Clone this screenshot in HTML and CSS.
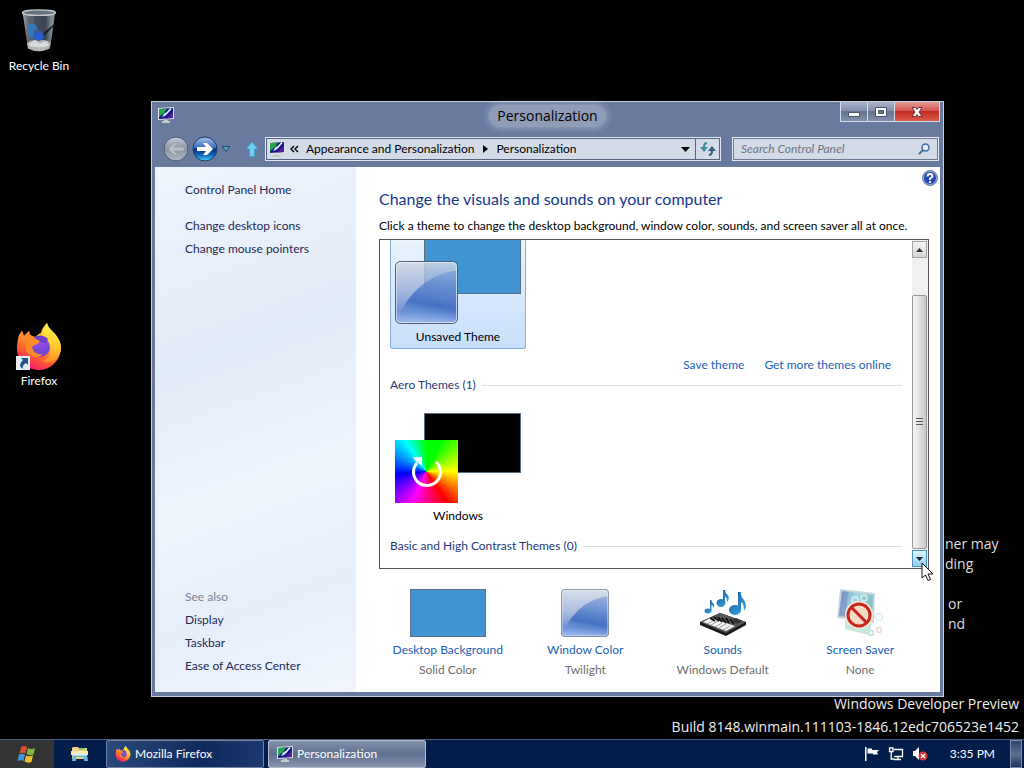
FILE: index.html
```html
<!DOCTYPE html>
<html lang="en">
<head>
  <meta charset="UTF-8">
  <meta name="viewport" content="width=device-width, initial-scale=1.0">
  <title>Personalization</title>
  <link rel="stylesheet" href="styles.css">
</head>
<body>
  <!-- shared icons -->
  <svg class="defs" aria-hidden="true">
    <defs>
      <linearGradient id="ffOuter" x1="0.8" y1="0" x2="0.3" y2="1">
        <stop offset="0" stop-color="#fff44f"/>
        <stop offset="0.35" stop-color="#ffb82e"/>
        <stop offset="0.65" stop-color="#ff6a2b"/>
        <stop offset="1" stop-color="#f5156c"/>
      </linearGradient>
      <linearGradient id="ffTail" x1="0.5" y1="0" x2="0.5" y2="1">
        <stop offset="0" stop-color="#fff04a"/>
        <stop offset="0.6" stop-color="#ffc92e"/>
        <stop offset="1" stop-color="#ff8a25"/>
      </linearGradient>
      <radialGradient id="ffGlobe" cx="0.6" cy="0.2" r="0.9">
        <stop offset="0" stop-color="#a44bea"/>
        <stop offset="1" stop-color="#5a45c8"/>
      </radialGradient>
      <linearGradient id="glass" x1="0" y1="0" x2="0" y2="1">
        <stop offset="0" stop-color="#d3dbe8" stop-opacity="0.85"/>
        <stop offset="0.45" stop-color="#93aad4" stop-opacity="0.75"/>
        <stop offset="0.8" stop-color="#6f93d6"/>
        <stop offset="1" stop-color="#9fbcf0"/>
      </linearGradient>
      <linearGradient id="glassDark" x1="0.6" y1="0" x2="0.4" y2="1">
        <stop offset="0" stop-color="#6f94d6" stop-opacity="0.6"/>
        <stop offset="0.65" stop-color="#4471c2"/>
        <stop offset="1" stop-color="#7ba0e0" stop-opacity="0"/>
      </linearGradient>
      <linearGradient id="bin" x1="0" y1="0" x2="1" y2="0">
        <stop offset="0" stop-color="#a7adb3"/>
        <stop offset="0.2" stop-color="#46505c"/>
        <stop offset="0.7" stop-color="#3c4653"/>
        <stop offset="0.9" stop-color="#8a929a"/>
        <stop offset="1" stop-color="#5b636b"/>
      </linearGradient>
      <linearGradient id="backBall" x1="0" y1="0" x2="0" y2="1">
        <stop offset="0" stop-color="#c3cad4"/>
        <stop offset="0.5" stop-color="#8b96a5"/>
        <stop offset="1" stop-color="#aeb9c6"/>
      </linearGradient>
      <linearGradient id="nextBall" x1="0" y1="0" x2="0" y2="1">
        <stop offset="0" stop-color="#a9c3ea"/>
        <stop offset="0.45" stop-color="#3a6cb8"/>
        <stop offset="0.5" stop-color="#082f7a"/>
        <stop offset="0.75" stop-color="#1166bb"/>
        <stop offset="1" stop-color="#46d4f8"/>
      </linearGradient>
      <linearGradient id="note" x1="0" y1="0" x2="1" y2="1">
        <stop offset="0" stop-color="#2168a8"/>
        <stop offset="1" stop-color="#38a8e4"/>
      </linearGradient>
      <linearGradient id="saver" x1="0" y1="0" x2="1" y2="0.4">
        <stop offset="0" stop-color="#6f93b8"/>
        <stop offset="0.5" stop-color="#a4d8e2"/>
        <stop offset="1" stop-color="#7cc0c4"/>
      </linearGradient>
    </defs>

    <symbol id="firefox" viewBox="0 0 48 48">
      <path fill="url(#ffOuter)" d="M4 12 7 8 9 13 14 8 15 12 20 14Q25 10 26 10C27 5 30 2 32 0 33 5 38 8 41 12 44 16 46 20 46 27 44 39 35 47 24 47 12 47 2 38 2 25 2 20 3 15 4 12Z"/>
      <path fill="url(#ffTail)" d="M32 0C33 6 39 9 42 14 47 20 47 27 43 34 39 39 32 41 28 38 37 34 38 23 31 17 26 13 28 5 32 0Z"/>
      <circle fill="url(#ffGlobe)" cx="25" cy="24" r="10"/>
      <path fill="#6c3fd0" d="M19 14Q27 10 33 16L31 20 23 19Z"/>
      <path fill="#ff8a2a" d="M4 12 7 8 9 13 14 8 15 12C18 13 21 17 25 18 24 21 19 22 17 24 18 29 22 32 28 31 24 36 14 35 11 27 10 21 12 18 9 17Z"/>
    </symbol>

    <symbol id="monitor" viewBox="0 0 16 16">
      <path fill="#dfe3e6" d="M0 1 16 0V12L0 13Z"/>
      <path fill="#131a86" d="M1 2 15 1V11L1 12Z"/>
      <path fill="#29a64a" d="M1 2 9 1.500 6 6 1 10Z"/>
      <path fill="#5b1c9c" d="M8 11.500 15 5V11Z"/>
      <path stroke="#f4f6fa" stroke-width="1.600" d="M13 1.500 9 6"/>
      <path fill="#c5dcf5" d="M8.500 5 10 6.500 7 9 4 10 6 6.500Z"/>
      <path fill="#c6cbd0" d="M6 13H10V14H12V16H4V14H6Z"/>
    </symbol>

    <symbol id="glass-tile" viewBox="0 0 64 64">
      <rect x="0.500" y="0.500" width="63" height="63" rx="5" fill="url(#glass)" stroke="#46597a"/>
      <path fill="url(#glassDark)" d="M4 56C13 34 34 13 62 10V62H4Z"/>
      <rect x="1.500" y="1.500" width="61" height="61" rx="4" fill="none" stroke="#fff" stroke-opacity="0.55"/>
    </symbol>
  </svg>

  <div class="screen">
    <main class="desktop">
      <div class="shortcuts">
        <a class="shortcut" href="#bin">
          <svg width="48" height="48" viewBox="0 0 48 48" aria-hidden="true">
            <path fill="url(#bin)" d="M6 3H42L36 43Q24 49 12 43Z"/>
            <path fill="#7a838e" opacity="0.35" d="M8 4H18L21 44 12 43Z"/>
            <path fill="#1c222b" d="M42 15 30 25 27 32 39 20Z"/>
            <path fill="#3477bd" d="M11 20Q15 13 21 18L23 24 19 23 18 27 20 31 14 31Z"/>
            <path fill="#2a5ccd" d="M17 28 25 23 30 30 26 35 18 33Z"/>
            <path fill="#b4b6b7" d="M11 37Q17 32 24 35 31 32 37 37L35 43Q24 49 12 43Z"/>
            <path fill="#d9dadb" d="M13 38 20 34 25 38 32 35 35 40 26 42 15 41Z"/>
            <ellipse cx="24" cy="4" rx="18" ry="3" fill="#68727c" stroke="#c4cacf" stroke-width="1.500"/>
          </svg>
          <span>Recycle Bin</span>
        </a>
        <a class="shortcut" href="#firefox-app">
          <span class="badged">
            <svg width="48" height="48" aria-hidden="true"><use href="#firefox"/></svg>
            <svg class="badge" width="14" height="14" viewBox="0 0 14 14" aria-hidden="true">
              <path fill="#e4ebf2" d="M0 0H14V14H0Z"/>
              <path fill="#1e5488" d="M5 2H12V9L10 7Q6 9 7 13 1 10 7 4Z"/>
            </svg>
          </span>
          <span>Firefox</span>
        </a>
      </div>

      <div class="notice">
        <p>ner may<br>ding</p>
        <p>or<br>nd</p>
      </div>
      <div class="build">
        <p>Windows Developer Preview</p>
        <p>Build 8148.winmain.111103-1846.12edc706523e1452</p>
      </div>

      <section class="window" aria-labelledby="title">
        <header class="titlebar">
          <svg class="app-icon" width="16" height="16" aria-hidden="true"><use href="#monitor"/></svg>
          <h1 id="title">Personalization</h1>
          <div class="controls">
            <button type="button" aria-label="Minimize">
              <svg width="14" height="12" viewBox="0 0 14 12"><path fill="#fff" stroke="#46536b" d="M1.500 6.500H12.500V10.500H1.500Z"/></svg>
            </button>
            <button type="button" aria-label="Maximize">
              <svg width="14" height="12" viewBox="0 0 14 12"><path fill="#fff" fill-rule="evenodd" stroke="#46536b" d="M1.500 1.500H12.500V10.500H1.500ZM4.500 4.500V7.500H9.500V4.500Z"/></svg>
            </button>
            <button type="button" class="close" aria-label="Close">
              <svg width="14" height="12" viewBox="0 0 14 12"><path fill="#fff" stroke="#6d3038" d="M2 1.500H5.500L7 3.500 8.500 1.500H12L9 6 12 10.500H8.500L7 8.500 5.500 10.500H2L5 6Z"/></svg>
            </button>
          </div>
        </header>

        <nav class="navbar">
          <div class="history">
            <button type="button" aria-label="Back">
              <svg width="26" height="26" viewBox="0 0 26 26">
                <circle cx="13" cy="13" r="12" fill="url(#backBall)" stroke="#4f5d75"/>
                <path fill="#b6bec8" stroke="#8a95a3" stroke-width="0.500" d="M5 13 11 7H15L11 11H21V15H11L15 19H11Z"/>
              </svg>
            </button>
            <button type="button" aria-label="Forward">
              <svg width="26" height="26" viewBox="0 0 26 26">
                <circle cx="13" cy="13" r="12" fill="url(#nextBall)" stroke="#1f3c6c"/>
                <path fill="#fff" d="M5 11H14L11 7H15L21 13 15 19H11L14 15H5Z"/>
              </svg>
            </button>
            <button type="button" aria-label="Recent pages">
              <svg width="10" height="8" viewBox="0 0 10 8"><path fill="#5c9ac4" stroke="#22476d" d="M1 1.500H9L5 6.500Z"/></svg>
            </button>
          </div>
          <button type="button" class="up" aria-label="Up">
            <svg width="14" height="16" viewBox="0 0 14 16"><path fill="#6fd0f2" stroke="#4a9cc4" d="M7 1 13 8H9.500V15.500H4.500V8H1Z"/></svg>
          </button>
          <div class="address">
            <svg width="16" height="16" aria-hidden="true"><use href="#monitor"/></svg>
            <svg class="chevrons" width="9" height="8" viewBox="0 0 9 8" aria-hidden="true"><path fill="none" stroke="#000" stroke-width="1.400" d="M4 1 1 4 4 7M8 1 5 4 8 7"/></svg>
            <a href="#appearance">Appearance and Personalization</a>
            <svg class="arrow" width="5" height="8" viewBox="0 0 5 8" aria-hidden="true"><path d="M0 0 5 4 0 8Z"/></svg>
            <a href="#personalization">Personalization</a>
            <button type="button" class="drop" aria-label="Previous locations">
              <svg width="9" height="5" viewBox="0 0 9 5"><path d="M0 0H9L4.500 5Z"/></svg>
            </button>
            <button type="button" class="refresh" aria-label="Refresh">
              <svg width="16" height="14" viewBox="0 0 16 14">
                <path fill="#3f8fa4" d="M7 0Q3 0 3 5H0L4 10 8 5H5Q5 2 7 2Z"/>
                <path fill="#2f6080" d="M9 14Q13 14 13 9H16L12 4 8 9H11Q11 12 9 12Z"/>
              </svg>
            </button>
          </div>
          <label class="search">
            <input type="text" placeholder="Search Control Panel" aria-label="Search Control Panel">
            <svg width="12" height="12" viewBox="0 0 12 12" aria-hidden="true">
              <circle cx="7.500" cy="4.500" r="3.500" fill="#e3edf8" stroke="#3d6f9b" stroke-width="1.500"/>
              <path stroke="#3d6f9b" stroke-width="2" d="M5 7 1 11"/>
            </svg>
          </label>
        </nav>

        <div class="client">
          <aside class="sidebar">
            <a class="home" href="#home">Control Panel Home</a>
            <a href="#icons">Change desktop icons</a>
            <a href="#pointers">Change mouse pointers</a>
            <div class="see-also">
              <span>See also</span>
              <a href="#display">Display</a>
              <a href="#taskbar">Taskbar</a>
              <a href="#ease">Ease of Access Center</a>
            </div>
          </aside>

          <div class="content">
            <button type="button" class="help" aria-label="Help">
              <svg width="16" height="16" viewBox="0 0 16 16">
                <circle cx="8" cy="8" r="7.500" fill="#274bb0" stroke="#7b8aa8"/>
                <circle cx="8" cy="8" r="6.500" fill="none" stroke="#c5d3f2" stroke-width="0.700"/>
                <path fill="none" stroke="#fff" stroke-width="1.800" d="M5.500 6.500Q5.500 4 8 4T10.500 6.300Q10.500 7.300 8 8.500V10M8 11V13"/>
              </svg>
            </button>
            <h2>Change the visuals and sounds on your computer</h2>
            <p>Click a theme to change the desktop background, window color, sounds, and screen saver all at once.</p>

            <div class="themes">
              <div class="theme-list">
                <button type="button" class="theme selected">
                  <span class="thumb">
                    <span class="wall"></span>
                    <svg class="tile" aria-hidden="true"><use href="#glass-tile"/></svg>
                  </span>
                  <span>Unsaved Theme</span>
                </button>
                <div class="theme-links">
                  <a href="#save">Save theme</a>
                  <a href="#online">Get more themes online</a>
                </div>
                <h3>Aero Themes (1)</h3>
                <button type="button" class="theme">
                  <span class="thumb">
                    <span class="wall black"></span>
                    <span class="tile rainbow">
                      <svg width="36" height="36" viewBox="0 0 36 36" aria-hidden="true">
                        <path fill="none" stroke="#fff" stroke-width="3" d="M27 8A13.500 13.500 0 1 1 8 9"/>
                        <path fill="#fff" d="M4 3H13V12L10 9.500 6 6.500Z"/>
                      </svg>
                    </span>
                  </span>
                  <span>Windows</span>
                </button>
                <h3>Basic and High Contrast Themes (0)</h3>
              </div>
              <div class="scrollbar">
                <button type="button" aria-label="Scroll up">
                  <svg width="7" height="4" viewBox="0 0 7 4"><path fill="#333" d="M0 4 3.500 0 7 4Z"/></svg>
                </button>
                <div class="track">
                  <div class="grip">
                    <svg width="7" height="8" viewBox="0 0 7 8" aria-hidden="true"><path stroke="#555" d="M0 0.500H7M0 3.500H7M0 6.500H7"/></svg>
                  </div>
                </div>
                <button type="button" class="hot" aria-label="Scroll down">
                  <svg width="7" height="4" viewBox="0 0 7 4"><path fill="#123" d="M0 0H7L3.500 4Z"/></svg>
                </button>
              </div>
            </div>

            <div class="settings">
              <a href="#background">
                <span class="swatch"></span>
                <span>Desktop Background</span>
                <small>Solid Color</small>
              </a>
              <a href="#color">
                <svg width="48" height="48" aria-hidden="true"><use href="#glass-tile"/></svg>
                <span>Window Color</span>
                <small>Twilight</small>
              </a>
              <a href="#sounds">
                <svg width="48" height="48" viewBox="0 0 48 48" aria-hidden="true">
                  <path fill="#181818" d="M1 33 21 24 47 33V36L27 47 1 36Z"/>
                  <path fill="#55585a" d="M1 33 21 24 47 33 27 44Z"/>
                  <path fill="#f6f6f6" d="M4 33 11 29 36 37 27 42Z"/>
                  <path stroke="#777" stroke-width="0.700" d="M8 35 15 31M12 36 19 32M16 38 23 34M20 39 27 35M24 41 31 37"/>
                  <path stroke="#111" stroke-width="1.800" d="M11 29 16 32M15 28 20 32M19 28 23 33M23 29 27 34M27 29 30 34M31 30 35 35"/>
                  <path fill="#333" d="M33 31 37 29 43 32 38 35Z"/>
                  <g fill="url(#note)">
                    <ellipse cx="9" cy="22" rx="3.500" ry="2.500"/>
                    <path d="M11 22V11H12.500Q12 13 15 15 16 17 14 19 14 16 12.500 16V22Z"/>
                    <ellipse cx="22" cy="14" rx="4.500" ry="4"/>
                    <path d="M24 14V1H26Q26 4 29 6 31 10 28 13 28 8 26 8V15Z"/>
                    <ellipse cx="36" cy="21" rx="6" ry="5"/>
                    <path d="M39 21V3H42Q41 7 45 11 49 17 45 22 45 14 42 13V22Z"/>
                  </g>
                </svg>
                <span>Sounds</span>
                <small>Windows Default</small>
              </a>
              <a href="#saver">
                <svg width="48" height="48" viewBox="0 0 48 48" aria-hidden="true">
                  <path fill="#c7e6dc" d="M9 29 36 32 33 46 9 40Z"/>
                  <path fill="#c9d6dc" d="M4 0 39 4 38 34 1 29Z"/>
                  <path fill="url(#saver)" d="M6 2 37 6 36 32 3 27Z"/>
                  <path fill="#7c94c8" d="M6 2 12 3 10 28 3 27Z" opacity="0.700"/>
                  <g fill="none" stroke="#d3f0ee" stroke-width="1.500">
                    <circle cx="19" cy="11" r="3"/>
                    <circle cx="28" cy="9" r="3"/>
                    <circle cx="43" cy="28" r="3.500"/>
                    <circle cx="35" cy="44" r="2.500" stroke="#bfe3e4"/>
                    <circle cx="43" cy="41" r="2.500" stroke="#f3d5d9"/>
                  </g>
                  <circle cx="23" cy="26" r="11.500" fill="#fbe3d2" stroke="#f8e7dc" stroke-width="5"/>
                  <circle cx="23" cy="26" r="11" fill="#f7d9c6" stroke="#c52718" stroke-width="3"/>
                  <path stroke="#c52718" stroke-width="3" d="M15 18 31 34"/>
                </svg>
                <span>Screen Saver</span>
                <small>None</small>
              </a>
            </div>
          </div>
        </div>
      </section>
    </main>

    <footer class="taskbar">
      <button type="button" class="start" aria-label="Start">
        <svg width="20" height="20" viewBox="0 0 20 20">
          <path fill="#d8502c" d="M4 3Q7 1 10 3L8.500 9.500Q5.500 8 2.500 9.500Z"/>
          <path fill="#85b53c" d="M11 4Q14 6 18 4L16.500 10.500Q13 12 9.500 10Z"/>
          <path fill="#4394d8" d="M2 10.500Q5 9 8 10.500L6.500 17Q3.500 15.500 0.500 17Z"/>
          <path fill="#eebc35" d="M9 11.500Q12.500 13 16 11.500L14.500 18Q11 19.500 7.500 17.500Z"/>
        </svg>
      </button>
      <button type="button" class="explorer" aria-label="Windows Explorer">
        <svg width="18" height="16" viewBox="0 0 18 16">
          <path fill="#e8d389" d="M1 2 2 1H7L8 2H16V13H1Z"/>
          <path fill="#8ec66b" d="M8 2H14V4H8Z"/>
          <path fill="#f7eab4" d="M0 5H17V9H0Z"/>
          <path fill="#63b9dc" d="M2 8H16L17 15H13V11H5V15H1Z"/>
          <path fill="#d9f2fb" d="M2 8H16V9.500H2Z"/>
        </svg>
      </button>
      <button type="button" class="task">
        <svg width="16" height="16" aria-hidden="true"><use href="#firefox"/></svg>
        Mozilla Firefox
      </button>
      <button type="button" class="task active">
        <svg width="16" height="16" aria-hidden="true"><use href="#monitor"/></svg>
        Personalization
      </button>
      <div class="tray">
        <svg width="16" height="14" viewBox="0 0 16 14" aria-label="Action Center" role="img">
          <path fill="#fff" d="M1 0H2.500V14H1ZM3.500 1.500H8V3H15L13 5 14 7.500H9V6.500H3.500Z"/>
        </svg>
        <svg width="16" height="14" viewBox="0 0 16 14" aria-label="Network" role="img">
          <path fill="none" stroke="#fff" stroke-width="1.300" d="M6 2.500H14.500V9.500H6M1.500 1H5V4.500H1.500ZM3.200 5V12H6M10 10V12M6 12.500H13"/>
        </svg>
        <svg width="16" height="14" viewBox="0 0 16 14" aria-label="Volume muted" role="img">
          <path fill="#fff" d="M1 4H3L7 0V13L3 9H1Z"/>
          <circle cx="11" cy="9" r="4.500" fill="#d9343c"/>
          <path stroke="#fff" stroke-width="1.400" d="M9 7 13 11M13 7 9 11"/>
        </svg>
        <time>3:35 PM</time>
      </div>
      <button type="button" class="peek" aria-label="Show desktop"></button>
    </footer>

    <svg class="cursor" width="14" height="20" viewBox="0 0 14 20" aria-hidden="true">
      <path fill="#fff" stroke="#111" d="M1 1V16L4.500 13 7 18.500 9.500 17.500 7 12H12Z"/>
    </svg>
  </div>
</body>
</html>
```
FILE: styles.css
```css
* {
  box-sizing: border-box;
}
body {
  margin: 0;
  font-family: Lato, "Open Sans", sans-serif;
  font-size: 12px;
  line-height: 20px;
  color: #000;
  background-color: #000;
}
h1,
h2,
h3,
p {
  margin: 0;
  font-weight: normal;
}
a {
  text-decoration: none;
}
button {
  margin: 0;
  padding: 0;
  border: none;
  background: none;
  font: inherit;
  color: inherit;
}
svg {
  display: block;
  flex: none;
}
.defs {
  position: absolute;
  width: 0;
  height: 0;
}
.screen {
  position: relative;
  display: flex;
  flex-direction: column;
  height: 100vh;
  overflow: hidden;
}

/* desktop */
.desktop {
  position: relative;
  flex: 1;
  min-height: 0;
}
.shortcuts {
  display: flex;
  flex-direction: column;
  gap: 247px;
  width: 78px;
  padding-top: 8px;
}
.shortcut {
  display: flex;
  flex-direction: column;
  align-items: center;
  color: #fff;
}
.shortcut > svg {
  padding: 0 2px 2px;
}
.badged {
  position: relative;
}
.badge {
  position: absolute;
  left: 1px;
  bottom: 1px;
}
.notice {
  position: absolute;
  right: 0;
  bottom: 105px;
  width: 79px;
  font-family: "Open Sans", sans-serif;
  font-size: 14px;
  color: #ddd;
}
.notice p + p {
  margin-top: 20px;
  padding-left: 3px;
}
.build {
  position: absolute;
  right: 5px;
  bottom: 1px;
  font-family: "Open Sans", sans-serif;
  font-size: 14px;
  line-height: 23px;
  color: #eee;
  text-align: right;
}

/* window */
.window {
  position: absolute;
  top: 101px;
  right: 80px;
  bottom: 42px;
  left: 151px;
  display: flex;
  flex-direction: column;
  padding: 0 3px 4px;
  border: 1px solid #c5d0e2;
  background-color: #687b9f;
}
.titlebar {
  display: grid;
  grid-template-columns: 100px 1fr 100px;
  height: 29px;
}
.app-icon {
  margin: 5px 0 0 3px;
}
.titlebar h1 {
  justify-self: center;
  align-self: start;
  margin-top: 3px;
  padding: 0 8px;
  font-family: "Open Sans", sans-serif;
  font-size: 14px;
  line-height: 22px;
  border-radius: 11px;
  background-color: rgba(255, 255, 255, 0.25);
  box-shadow: 0 0 8px rgba(255, 255, 255, 0.4);
}
.controls {
  display: flex;
  align-self: start;
  border: 1px solid #d5dce8;
  border-top: none;
}
.controls button {
  display: grid;
  place-items: center;
  width: 27px;
  height: 19px;
  border-right: 1px solid #d5dce8;
  background: linear-gradient(#a8b3c7, #8391ac 45%, #64748f 50%, #8190ab);
}
.controls .close {
  flex: 1;
  border-right: none;
  background: linear-gradient(#e59a94, #d65a50 45%, #c02c20 50%, #dd5a4c);
}
.navbar {
  display: flex;
  align-items: center;
  height: 36px;
  padding: 0 1px 0 8px;
}
.history {
  display: flex;
  align-items: center;
  gap: 3px;
}
.up {
  margin: 0 6px 0 14px;
}
.address {
  flex: 1;
  display: flex;
  align-items: center;
  height: 24px;
  padding-left: 3px;
  border: 1px solid #e3e9f2;
  outline: 1px solid #55647f;
  outline-offset: -2px;
  background-color: #d3dbe8;
}
.address a {
  color: #000;
}
.chevrons {
  margin: 0 7px 0 5px;
}
.arrow {
  margin: 0 8px 0 9px;
}
.drop {
  margin-left: auto;
  padding: 8px 5px;
}
.refresh {
  align-self: stretch;
  padding: 0 4px;
  border-left: 1px solid #55647f;
}
.search {
  flex: none;
  display: flex;
  align-items: center;
  width: 207px;
  height: 24px;
  margin-left: 11px;
  padding: 0 8px;
  border: 1px solid #e3e9f2;
  outline: 1px solid #6b7a94;
  outline-offset: -2px;
  background-color: #d3dbe8;
}
.search input {
  flex: 1;
  min-width: 0;
  padding: 0;
  border: none;
  outline: none;
  background: none;
  font: inherit;
}
.search input::placeholder {
  color: #6c7482;
  font-style: italic;
}

/* window content */
.client {
  flex: 1;
  display: flex;
  min-height: 0;
  background-color: #fff;
}
.sidebar {
  display: flex;
  flex-direction: column;
  width: 201px;
  padding: 11px 10px 15px 30px;
  line-height: 23px;
  background: linear-gradient(160deg, #eef4fc 0%, #e2ebf8 35%, #eef4fc 60%, #e6eefa 80%, #f1f6fd 100%);
}
.sidebar a {
  color: #1d2a55;
}
.sidebar .home {
  margin-bottom: 13px;
}
.see-also {
  display: flex;
  flex-direction: column;
  margin-top: auto;
  color: #7d8490;
}
.content {
  position: relative;
  flex: 1;
  display: flex;
  flex-direction: column;
  min-width: 0;
  padding: 20px 11px 12px 23px;
}
.help {
  position: absolute;
  top: 3px;
  right: 2px;
}
.content h2 {
  font-size: 16px;
  line-height: 24px;
  color: #14388c;
}
.content p {
  padding: 5px 0 3px;
  white-space: nowrap;
}
.themes {
  flex: 1;
  display: flex;
  min-height: 0;
  border: 1px solid #555;
}
.theme-list {
  flex: 1;
  overflow: hidden;
  padding-left: 10px;
}
.theme {
  display: flex;
  flex-direction: column;
  width: 136px;
  padding: 18px 5px 10px;
}
.theme > span:last-child {
  align-self: center;
}
.theme.selected {
  padding: 0 4px 1px;
  border: 1px solid #86aee0;
  border-top: none;
  border-radius: 0 0 3px 3px;
  background: linear-gradient(#eaf3fe, #c6dffb);
}
.thumb {
  position: relative;
  width: 126px;
  height: 93px;
}
.selected .thumb {
  height: 87px;
}
.wall {
  display: block;
  width: 97px;
  height: 60px;
  margin-left: 29px;
  border: 1px solid #5c6f80;
  background-color: #3f94d1;
}
.selected .wall {
  height: 54px;
  border-top: none;
}
.wall.black {
  background-color: #000;
}
.tile {
  position: absolute;
  left: 0;
  bottom: 3px;
  width: 63px;
  height: 63px;
}
.rainbow {
  display: grid;
  place-items: center;
  background: conic-gradient(#0f0, #0f0 25deg, #ff0 90deg, #f00 145deg, #f0f 205deg, #00f 265deg, #0ff 325deg, #0f0);
}
.theme-links {
  display: flex;
  justify-content: flex-end;
  gap: 20px;
  padding: 6px 21px 0 0;
}
.theme-links a {
  color: #1a62b8;
}
.theme-list h3 {
  display: flex;
  align-items: center;
  gap: 6px;
  padding-right: 10px;
  font-size: 12px;
  color: #27397c;
}
.theme-list h3::after {
  content: "";
  flex: 1;
  height: 1px;
  background-color: #dcdfe4;
}
.scrollbar {
  display: flex;
  flex-direction: column;
  width: 16px;
  padding: 1px 1px 1px 0;
  background-color: #f0f0f0;
}
.scrollbar button {
  display: grid;
  place-items: center;
  height: 17px;
  border: 1px solid #a4a4a4;
  background: linear-gradient(#f4f4f4, #d5d5d5);
}
.scrollbar .hot {
  border-color: #4b90b5;
  background: linear-gradient(#dff3fc, #93cfee);
}
.track {
  flex: 1;
  display: flex;
  flex-direction: column;
  justify-content: flex-end;
}
.grip {
  display: grid;
  place-items: center;
  height: 87%;
  margin-bottom: 1px;
  border: 1px solid #979797;
  border-radius: 2px;
  background: linear-gradient(to right, #f5f5f5, #e3e3e3 45%, #c8c8c8);
}
.settings {
  display: grid;
  grid-template-columns: repeat(4, 1fr);
  padding-top: 20px;
}
.settings a {
  display: flex;
  flex-direction: column;
  align-items: center;
  color: #1a5fb4;
}
.settings svg,
.swatch {
  margin-bottom: 3px;
}
.swatch {
  width: 76px;
  height: 48px;
  border: 1px solid #5c7184;
  background-color: #3f94d1;
}
.settings small {
  font-size: 12px;
  color: #6e6e6e;
}

/* taskbar */
.taskbar {
  display: flex;
  height: 29px;
  border-top: 1px solid #4d5e7c;
  color: #fff;
  background-color: #031d4a;
}
.taskbar button {
  display: flex;
  align-items: center;
}
.taskbar .start {
  justify-content: center;
  width: 54px;
  background-color: #333;
}
.taskbar .explorer {
  justify-content: center;
  width: 52px;
}
.taskbar .task {
  gap: 4px;
  width: 158px;
  margin-right: 4px;
  padding-left: 8px;
  border: 1px solid #7385a5;
  border-radius: 2px;
  background: linear-gradient(100deg, #2c4a7c, #0e2a5c 60%, #1c3a70);
}
.taskbar .active {
  border-color: #b2bccd;
  background: linear-gradient(#8492ab, #5d6f90 50%, #8793ab);
}
.tray {
  display: flex;
  align-items: center;
  gap: 8px;
  margin-left: auto;
  padding-right: 15px;
}
.tray time {
  padding-left: 14px;
}
.taskbar .peek {
  width: 12px;
  margin-right: 2px;
  border: 1px solid #7f8da6;
  background: linear-gradient(#2c4266, #5c6f90 50%, #1d3359);
}

.cursor {
  position: absolute;
  top: 562px;
  left: 921px;
}
```
